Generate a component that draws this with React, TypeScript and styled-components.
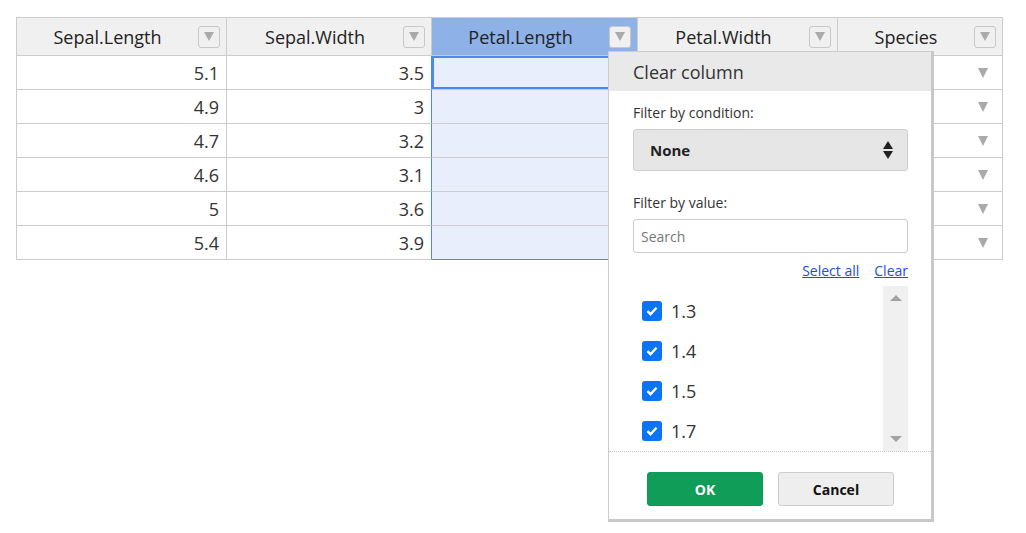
import React from "react";
import styled, { createGlobalStyle } from "styled-components";

const GlobalStyle = createGlobalStyle`
  body {
    margin: 0;
    background: #fff;
    font-family: "Open Sans", "Noto Sans", sans-serif;
    color: #333;
  }
`;

const Page = styled.div`
  padding: 17px 0 0 16px;
  position: relative;
  height: 533px;
  box-sizing: border-box;
`;

const Grid = styled.div`
  display: grid;
  grid-template-columns: 210px 205px 206px 200px 165px;
  width: 987px;
  border-top: 1px solid #ccc;
  border-left: 1px solid #ccc;
  box-sizing: border-box;
`;

const HeaderCell = styled.div<{ $active?: boolean }>`
  height: 38px;
  box-sizing: border-box;
  display: flex;
  align-items: center;
  padding-right: 6px;
  background: ${(p) => (p.$active ? "#8eb1e7" : "#f0f0f0")};
  border-right: 1px solid #ccc;
  border-bottom: 1px solid #ccc;
  font-size: 18px;
  color: #222;
`;

const HeaderLabel = styled.span`
  flex: 1;
  text-align: center;
`;

const FilterButton = styled.span`
  width: 22px;
  height: 22px;
  box-sizing: border-box;
  border: 1px solid #c8c8c8;
  border-radius: 3px;
  background: #f0f0f0;
  display: flex;
  align-items: center;
  justify-content: center;
`;

const Triangle = styled.span<{ $size?: number }>`
  width: 0;
  height: 0;
  border-left: ${(p) => (p.$size ?? 10) / 2}px solid transparent;
  border-right: ${(p) => (p.$size ?? 10) / 2}px solid transparent;
  border-top: ${(p) => (p.$size ?? 10) - 1}px solid #aaa;
`;

const Cell = styled.div<{
  $active?: boolean;
  $selected?: boolean;
  $last?: boolean;
  $blueRight?: boolean;
}>`
  height: 34px;
  box-sizing: border-box;
  display: flex;
  align-items: center;
  justify-content: flex-end;
  padding-right: 7px;
  font-size: 18px;
  color: #333;
  background: ${(p) => (p.$active ? "#e8eefc" : "#fff")};
  border-right: 1px solid ${(p) => (p.$blueRight ? "#4a89f3" : "#ccc")};
  border-bottom: 1px solid ${(p) => (p.$active && p.$last ? "#4a89f3" : "#ccc")};
  box-shadow: ${(p) => (p.$selected ? "inset 2px 2px 0 #4a89f3, inset -2px -2px 0 #4a89f3" : "none")};
`;

const SpeciesCell = styled(Cell)`
  padding-right: 14px;
`;

const Menu = styled.div`
  position: absolute;
  left: 608px;
  top: 51px;
  width: 326px;
  height: 471px;
  box-sizing: border-box;
  background: #fff;
  border: 1px solid #ccc;
  border-right: 3px solid #c8c8c8;
  border-bottom: 3px solid #c8c8c8;
  display: flex;
  flex-direction: column;
`;

const MenuItem = styled.div`
  height: 39px;
  background: #e9e9e9;
  display: flex;
  align-items: center;
  padding-left: 24px;
  font-size: 18px;
  color: #333;
`;

const Section = styled.div`
  padding: 0 23px 0 24px;
  display: flex;
  flex-direction: column;
`;

const Label = styled.div<{ $top: number }>`
  font-size: 14px;
  color: #333;
  margin-top: ${(p) => p.$top}px;
  line-height: 20px;
`;

const SelectBox = styled.div`
  margin-top: 6px;
  height: 42px;
  box-sizing: border-box;
  border: 1px solid #ccc;
  border-radius: 3px;
  background: #e6e6e6;
  display: flex;
  align-items: center;
  justify-content: space-between;
  padding: 0 14px 0 16px;
  font-size: 15px;
  font-weight: 700;
  color: #222;
`;

const Arrows = styled.span`
  display: flex;
  flex-direction: column;
  gap: 2px;
`;

const UpTri = styled.span`
  width: 0;
  height: 0;
  border-left: 5px solid transparent;
  border-right: 5px solid transparent;
  border-bottom: 8px solid #222;
`;

const DownTri = styled.span`
  width: 0;
  height: 0;
  border-left: 5px solid transparent;
  border-right: 5px solid transparent;
  border-top: 8px solid #222;
`;

const SearchInput = styled.input`
  margin-top: 6px;
  height: 34px;
  box-sizing: border-box;
  border: 1px solid #ccc;
  border-radius: 3px;
  padding: 0 7px;
  font-family: inherit;
  font-size: 14px;
  color: #333;
  outline: none;
  &::placeholder {
    color: #777;
  }
`;

const Links = styled.div`
  display: flex;
  justify-content: flex-end;
  gap: 15px;
  margin-top: 8px;
  height: 20px;
  line-height: 20px;
`;

const Link = styled.a`
  font-size: 14px;
  color: #1a4fd8;
  text-decoration: underline;
  cursor: pointer;
`;

const ListArea = styled.div`
  margin-top: 5px;
  height: 165px;
  display: flex;
`;

const List = styled.div`
  flex: 1;
  padding-top: 5px;
  display: flex;
  flex-direction: column;
`;

const Option = styled.label`
  height: 40px;
  display: flex;
  align-items: center;
  gap: 9px;
  padding-left: 9px;
  font-size: 18px;
  color: #333;
`;

const Check = styled.span`
  width: 20px;
  height: 20px;
  border-radius: 3px;
  background: #0b74f5;
  display: flex;
  align-items: center;
  justify-content: center;
`;

const ScrollTrack = styled.div`
  width: 25px;
  background: #f0f0f0;
  display: flex;
  flex-direction: column;
  justify-content: space-between;
  align-items: center;
  padding: 9px 0 9px;
`;

const ScrollUp = styled.span`
  width: 0;
  height: 0;
  border-left: 6px solid transparent;
  border-right: 6px solid transparent;
  border-bottom: 6px solid #a3a3a3;
`;

const ScrollDown = styled.span`
  width: 0;
  height: 0;
  border-left: 6px solid transparent;
  border-right: 6px solid transparent;
  border-top: 6px solid #a3a3a3;
`;

const Footer = styled.div`
  border-top: 1px dotted #c8c8c8;
  display: flex;
  gap: 15px;
  padding: 20px 0 0 38px;
`;

const Button = styled.button<{ $primary?: boolean }>`
  width: 116px;
  height: 34px;
  box-sizing: border-box;
  border-radius: 3px;
  border: 1px solid ${(p) => (p.$primary ? "#0e9a57" : "#ccc")};
  background: ${(p) => (p.$primary ? "#0f9d58" : "#eeeeee")};
  color: ${(p) => (p.$primary ? "#fff" : "#111")};
  font-family: inherit;
  font-size: 14px;
  font-weight: 700;
`;

const columns = ["Sepal.Length", "Sepal.Width", "Petal.Length", "Petal.Width", "Species"];
const rows = [
  ["5.1", "3.5"],
  ["4.9", "3"],
  ["4.7", "3.2"],
  ["4.6", "3.1"],
  ["5", "3.6"],
  ["5.4", "3.9"],
];
const values = ["1.3", "1.4", "1.5", "1.7"];

function CheckMark() {
  return (
    <svg width="12" height="10" viewBox="0 0 12 10">
      <path d="M1.5 5.2 L4.5 8.2 L10.5 1.8" fill="none" stroke="#fff" strokeWidth="2.4" />
    </svg>
  );
}

export default function App() {
  return (
    <Page>
      <GlobalStyle />
      <Grid>
        {columns.map((c, i) => (
          <HeaderCell key={c} $active={i === 2}>
            <HeaderLabel>{c}</HeaderLabel>
            <FilterButton>
              <Triangle $size={10} />
            </FilterButton>
          </HeaderCell>
        ))}
        {rows.map((r, ri) => (
          <React.Fragment key={ri}>
            <Cell>{r[0]}</Cell>
            <Cell $blueRight>{r[1]}</Cell>
            <Cell $active $selected={ri === 0} $last={ri === rows.length - 1} />
            <Cell />
            <SpeciesCell>
              <Triangle $size={11} />
            </SpeciesCell>
          </React.Fragment>
        ))}
      </Grid>

      <Menu>
        <MenuItem>Clear column</MenuItem>
        <Section>
          <Label $top={12}>Filter by condition:</Label>
          <SelectBox>
            None
            <Arrows>
              <UpTri />
              <DownTri />
            </Arrows>
          </SelectBox>
          <Label $top={22}>Filter by value:</Label>
          <SearchInput placeholder="Search" readOnly />
          <Links>
            <Link>Select all</Link>
            <Link>Clear</Link>
          </Links>
          <ListArea>
            <List>
              {values.map((v) => (
                <Option key={v}>
                  <Check>
                    <CheckMark />
                  </Check>
                  {v}
                </Option>
              ))}
            </List>
            <ScrollTrack>
              <ScrollUp />
              <ScrollDown />
            </ScrollTrack>
          </ListArea>
        </Section>
        <Footer>
          <Button $primary>OK</Button>
          <Button>Cancel</Button>
        </Footer>
      </Menu>
    </Page>
  );
}
